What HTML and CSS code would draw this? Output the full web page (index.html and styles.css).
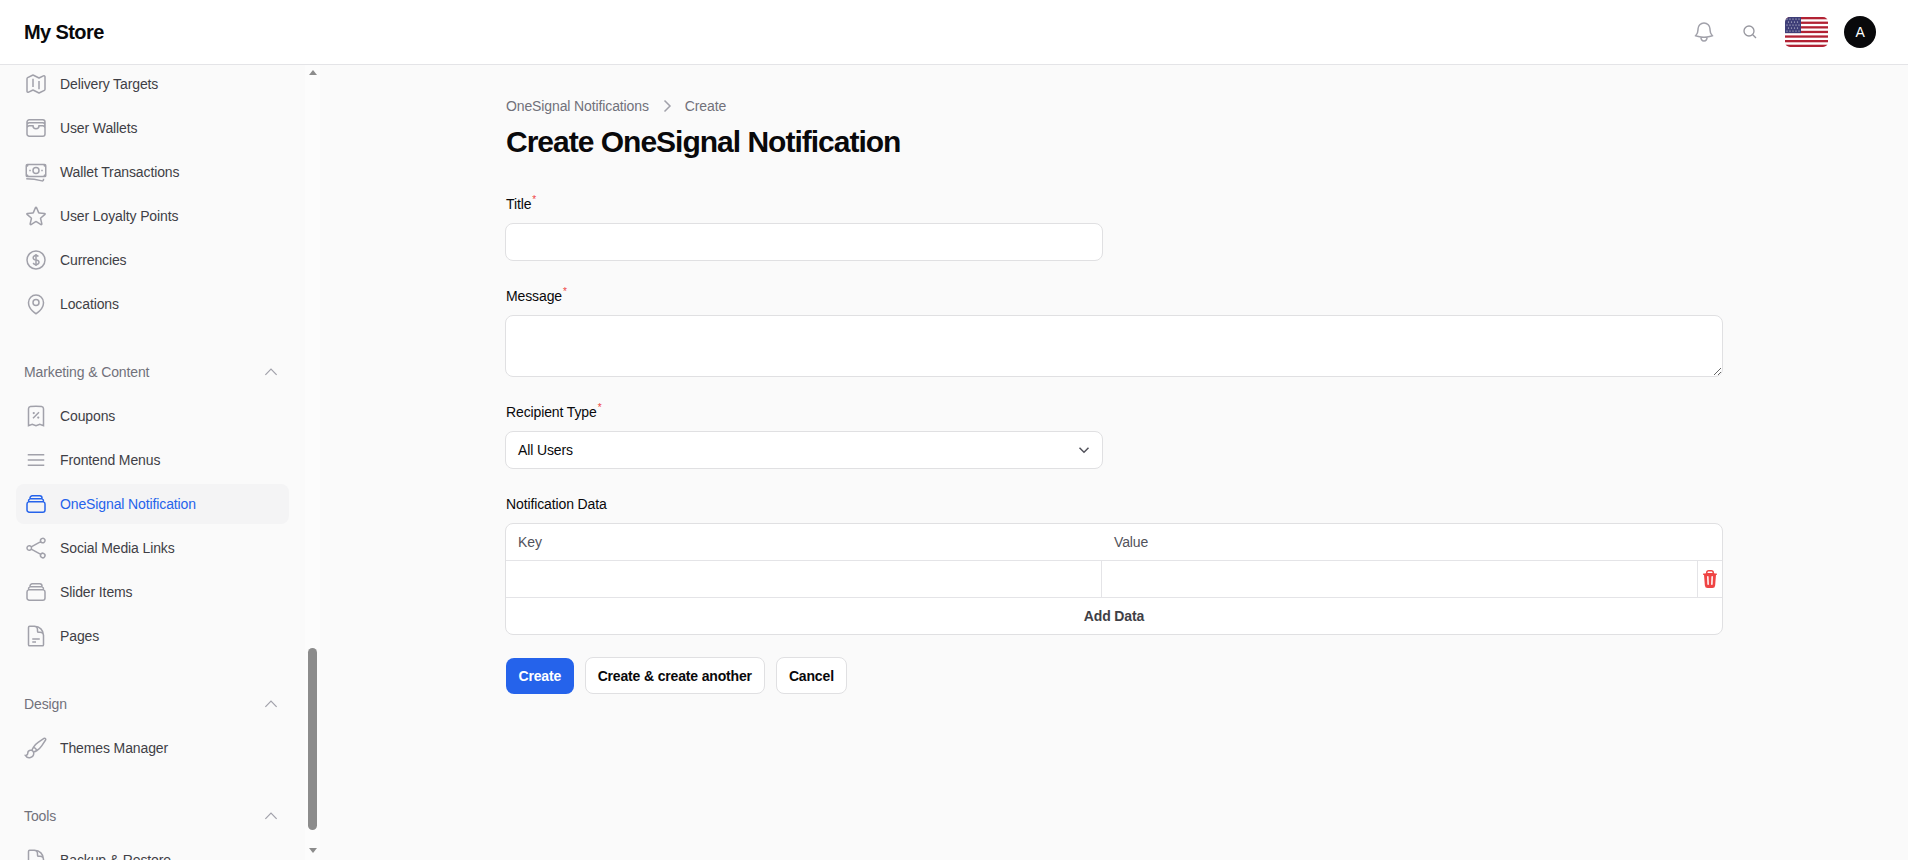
FILE: index.html
```html
<!DOCTYPE html>
<html lang="en">
<head>
<meta charset="utf-8">
<title>Create OneSignal Notification</title>
<link rel="stylesheet" href="styles.css">
</head>
<body>
<svg class="sprite" aria-hidden="true">
  <symbol id="i-map" viewBox="0 0 24 24"><path d="M9 6.75V15m6-6v8.25m.503 3.498 4.875-2.437c.381-.19.622-.58.622-1.006V4.82c0-.836-.88-1.38-1.628-1.006l-3.869 1.934c-.317.159-.69.159-1.006 0L9.503 3.252a1.125 1.125 0 0 0-1.006 0L3.622 5.689C3.24 5.88 3 6.27 3 6.695V19.18c0 .836.88 1.38 1.628 1.006l3.869-1.934c.317-.159.69-.159 1.006 0l4.994 2.497c.317.158.69.158 1.006 0Z"/></symbol>
  <symbol id="i-wallet" viewBox="0 0 24 24"><path d="M21 12a2.25 2.25 0 0 0-2.25-2.25H15a3 3 0 1 1-6 0H5.25A2.25 2.25 0 0 0 3 12m18 0v6a2.25 2.25 0 0 1-2.25 2.25H5.25A2.25 2.25 0 0 1 3 18v-6m18 0V9M3 12V9m18 0a2.25 2.25 0 0 0-2.25-2.25H5.25A2.25 2.25 0 0 0 3 9m18 0V6a2.25 2.25 0 0 0-2.25-2.25H5.25A2.25 2.25 0 0 0 3 6v3"/></symbol>
  <symbol id="i-bank" viewBox="0 0 24 24"><path d="M2.25 18.75a60.07 60.07 0 0 1 15.797 2.101c.727.198 1.453-.342 1.453-1.096V18.75M3.75 4.5v.75A.75.75 0 0 1 3 6h-.75m0 0v-.375c0-.621.504-1.125 1.125-1.125H20.25M2.25 6v9m18-10.5v.75c0 .414.336.75.75.75h.75m-1.5-1.5h.375c.621 0 1.125.504 1.125 1.125v9.75c0 .621-.504 1.125-1.125 1.125h-.375m1.5-1.5H21a.75.75 0 0 0-.75.75v.75m0 0H3.75m0 0h-.375a1.125 1.125 0 0 1-1.125-1.125V15m1.5 1.5v-.75A.75.75 0 0 0 3 15h-.75M15 10.5a3 3 0 1 1-6 0 3 3 0 0 1 6 0Zm3 0h.008v.008H18V10.5Zm-12 0h.008v.008H6V10.5Z"/></symbol>
  <symbol id="i-star" viewBox="0 0 24 24"><path d="M11.48 3.499a.562.562 0 0 1 1.04 0l2.125 5.111a.563.563 0 0 0 .475.345l5.518.442c.499.04.701.663.321.988l-4.204 3.602a.563.563 0 0 0-.182.557l1.285 5.385a.562.562 0 0 1-.84.61l-4.725-2.885a.562.562 0 0 0-.586 0L6.982 20.54a.562.562 0 0 1-.84-.61l1.285-5.386a.562.562 0 0 0-.182-.557l-4.204-3.602a.562.562 0 0 1 .321-.988l5.518-.442a.563.563 0 0 0 .475-.345L11.48 3.5Z"/></symbol>
  <symbol id="i-dollar" viewBox="0 0 24 24"><path d="M12 6v12m-3-2.818.879.659c1.171.879 3.07.879 4.242 0 1.172-.879 1.172-2.303 0-3.182C13.536 12.219 12.768 12 12 12c-.725 0-1.45-.22-2.003-.659-1.106-.879-1.106-2.303 0-3.182s2.9-.879 4.006 0l.415.33M21 12a9 9 0 1 1-18 0 9 9 0 0 1 18 0Z"/></symbol>
  <symbol id="i-pin" viewBox="0 0 24 24"><path d="M15 10.5a3 3 0 1 1-6 0 3 3 0 0 1 6 0Z"/><path d="M19.5 10.5c0 7.142-7.5 11.25-7.5 11.25S4.5 17.642 4.5 10.5a7.5 7.5 0 1 1 15 0Z"/></symbol>
  <symbol id="i-receipt" viewBox="0 0 24 24"><path d="m9 14.25 6-6m4.5-3.493V21.75l-3.75-1.5-3.75 1.5-3.75-1.5-3.75 1.5V4.757c0-1.108.806-2.057 1.907-2.185a48.507 48.507 0 0 1 11.186 0c1.1.128 1.907 1.077 1.907 2.185ZM9.75 9h.008v.008H9.75V9Zm.375 0a.375.375 0 1 1-.75 0 .375.375 0 0 1 .75 0Zm4.125 4.5h.008v.008h-.008V13.5Zm.375 0a.375.375 0 1 1-.75 0 .375.375 0 0 1 .75 0Z"/></symbol>
  <symbol id="i-bars" viewBox="0 0 24 24"><path d="M3.75 6.75h16.5M3.75 12h16.5m-16.5 5.25h16.5"/></symbol>
  <symbol id="i-stack" viewBox="0 0 24 24"><path d="M6 6.878V6a2.25 2.25 0 0 1 2.25-2.25h7.5A2.25 2.25 0 0 1 18 6v.878m-12 0c.235-.083.487-.128.75-.128h10.5c.263 0 .515.045.75.128m-12 0A2.25 2.25 0 0 0 4.5 9v.878m13.5-3A2.25 2.25 0 0 1 19.5 9v.878m0 0a2.246 2.246 0 0 0-.75-.128H5.25c-.263 0-.515.045-.75.128m15 0A2.25 2.25 0 0 1 21 12v6a2.25 2.25 0 0 1-2.25 2.25H5.25A2.25 2.25 0 0 1 3 18v-6c0-.98.626-1.813 1.5-2.122"/></symbol>
  <symbol id="i-share" viewBox="0 0 24 24"><path d="M7.217 10.907a2.25 2.25 0 1 0 0 2.186m0-2.186c.18.324.283.696.283 1.093s-.103.77-.283 1.093m0-2.186 9.566-5.314m-9.566 7.5 9.566 5.314m0 0a2.25 2.25 0 1 0 3.935 2.186 2.25 2.25 0 0 0-3.935-2.186Zm0-12.814a2.25 2.25 0 1 0 3.933-2.185 2.25 2.25 0 0 0-3.933 2.185Z"/></symbol>
  <symbol id="i-doc" viewBox="0 0 24 24"><path d="M19.5 14.25v-2.625a3.375 3.375 0 0 0-3.375-3.375h-1.5A1.125 1.125 0 0 1 13.5 7.125v-1.5a3.375 3.375 0 0 0-3.375-3.375H8.25m0 12.75h7.5m-7.5 3H12M10.5 2.25H5.625c-.621 0-1.125.504-1.125 1.125v17.25c0 .621.504 1.125 1.125 1.125h12.75c.621 0 1.125-.504 1.125-1.125V11.25a9 9 0 0 0-9-9Z"/></symbol>
  <symbol id="i-brush" viewBox="0 0 24 24"><path d="M9.53 16.122a3 3 0 0 0-5.78 1.128 2.25 2.25 0 0 1-2.4 2.245 4.5 4.5 0 0 0 8.4-2.245c0-.399-.078-.78-.22-1.128Zm0 0a15.998 15.998 0 0 0 3.388-1.62m-5.043-.025a15.994 15.994 0 0 1 1.622-3.395m3.42 3.42a15.995 15.995 0 0 0 4.764-4.648l3.876-5.814a1.151 1.151 0 0 0-1.597-1.597L14.146 6.32a15.996 15.996 0 0 0-4.649 4.763m3.42 3.42a6.776 6.776 0 0 0-3.42-3.42"/></symbol>
  <symbol id="i-up" viewBox="0 0 24 24"><path d="m4.5 15.75 7.5-7.5 7.5 7.5"/></symbol>
</svg>

<header class="topbar">
  <div class="brand">My Store</div>
  <div class="top-actions">
    <svg class="top-icon bell" viewBox="0 0 24 24"><path d="M14.857 17.082a23.848 23.848 0 0 0 5.454-1.31A8.967 8.967 0 0 1 18 9.75V9A6 6 0 0 0 6 9v.75a8.967 8.967 0 0 1-2.312 6.022c1.733.64 3.56 1.085 5.455 1.31m5.714 0a24.255 24.255 0 0 1-5.714 0m5.714 0a3 3 0 1 1-5.714 0"/></svg>
    <svg class="top-icon search" viewBox="0 0 24 24"><path d="m21 21-5.197-5.197m0 0A7.5 7.5 0 1 0 5.196 5.196a7.5 7.5 0 0 0 10.607 10.607Z"/></svg>
    <svg class="flag" viewBox="0 0 43 30">
      <rect width="43" height="30" fill="#fff"/>
      <g fill="#b22234">
        <rect y="0" width="43" height="2.3"/><rect y="4.6" width="43" height="2.3"/><rect y="9.2" width="43" height="2.3"/><rect y="13.8" width="43" height="2.3"/><rect y="18.4" width="43" height="2.3"/><rect y="23" width="43" height="2.3"/><rect y="27.7" width="43" height="2.3"/>
      </g>
      <rect width="16" height="16.1" fill="#3f3f78"/>
      <g fill="#fff" opacity=".85">
        <circle cx="2" cy="2" r=".6"/><circle cx="5" cy="2" r=".6"/><circle cx="8" cy="2" r=".6"/><circle cx="11" cy="2" r=".6"/><circle cx="14" cy="2" r=".6"/>
        <circle cx="3.5" cy="5" r=".6"/><circle cx="6.5" cy="5" r=".6"/><circle cx="9.5" cy="5" r=".6"/><circle cx="12.5" cy="5" r=".6"/>
        <circle cx="2" cy="8" r=".6"/><circle cx="5" cy="8" r=".6"/><circle cx="8" cy="8" r=".6"/><circle cx="11" cy="8" r=".6"/><circle cx="14" cy="8" r=".6"/>
        <circle cx="3.5" cy="11" r=".6"/><circle cx="6.5" cy="11" r=".6"/><circle cx="9.5" cy="11" r=".6"/><circle cx="12.5" cy="11" r=".6"/>
        <circle cx="2" cy="14" r=".6"/><circle cx="5" cy="14" r=".6"/><circle cx="8" cy="14" r=".6"/><circle cx="11" cy="14" r=".6"/><circle cx="14" cy="14" r=".6"/>
      </g>
    </svg>
    <div class="avatar">A</div>
  </div>
</header>

<div class="body-row">
  <aside class="sidebar">
    <nav class="nav">
      <ul class="group">
        <li class="item"><svg class="ico"><use href="#i-map"/></svg>Delivery Targets</li>
        <li class="item"><svg class="ico"><use href="#i-wallet"/></svg>User Wallets</li>
        <li class="item"><svg class="ico"><use href="#i-bank"/></svg>Wallet Transactions</li>
        <li class="item"><svg class="ico"><use href="#i-star"/></svg>User Loyalty Points</li>
        <li class="item"><svg class="ico"><use href="#i-dollar"/></svg>Currencies</li>
        <li class="item"><svg class="ico"><use href="#i-pin"/></svg>Locations</li>
      </ul>
      <div class="group-label">Marketing &amp; Content<svg class="chev"><use href="#i-up"/></svg></div>
      <ul class="group">
        <li class="item"><svg class="ico"><use href="#i-receipt"/></svg>Coupons</li>
        <li class="item"><svg class="ico"><use href="#i-bars"/></svg>Frontend Menus</li>
        <li class="item active"><svg class="ico"><use href="#i-stack"/></svg>OneSignal Notification</li>
        <li class="item"><svg class="ico"><use href="#i-share"/></svg>Social Media Links</li>
        <li class="item"><svg class="ico"><use href="#i-stack"/></svg>Slider Items</li>
        <li class="item"><svg class="ico"><use href="#i-doc"/></svg>Pages</li>
      </ul>
      <div class="group-label">Design<svg class="chev"><use href="#i-up"/></svg></div>
      <ul class="group">
        <li class="item"><svg class="ico"><use href="#i-brush"/></svg>Themes Manager</li>
      </ul>
      <div class="group-label">Tools<svg class="chev"><use href="#i-up"/></svg></div>
      <ul class="group">
        <li class="item"><svg class="ico"><use href="#i-doc"/></svg>Backup &amp; Restore</li>
      </ul>
    </nav>
    <div class="scrollbar">
      <span class="arrow-up"></span>
      <span class="thumb"></span>
      <span class="arrow-down"></span>
    </div>
  </aside>

  <main class="main">
    <div class="crumbs"><span>OneSignal Notifications</span>
      <svg class="crumb-sep" viewBox="0 0 20 20"><path d="M7.5 4.5 13 10l-5.500 5.500"/></svg>
      <span>Create</span></div>
    <h1 class="title">Create OneSignal Notification</h1>
    <form class="form">
      <div class="field half">
        <label class="label">Title<sup class="req">*</sup></label>
        <input class="control" type="text">
      </div>
      <div class="field">
        <label class="label">Message<sup class="req">*</sup></label>
        <textarea class="control area"></textarea>
      </div>
      <div class="field half">
        <label class="label">Recipient Type<sup class="req">*</sup></label>
        <div class="control select">All Users
          <svg class="sel-chev" viewBox="0 0 20 20"><path d="M5.500 7.750 10 12.250l4.500-4.500"/></svg>
        </div>
      </div>
      <div class="field">
        <label class="label">Notification Data</label>
        <div class="kv">
          <div class="kv-row kv-head"><div class="kv-cell">Key</div><div class="kv-cell">Value</div></div>
          <div class="kv-row">
            <div class="kv-cell"></div>
            <div class="kv-cell kv-val"></div>
            <div class="kv-del"><svg class="trash" viewBox="0 0 20 20"><path fill-rule="evenodd" clip-rule="evenodd" d="M8.750 1A2.750 2.750 0 0 0 6 3.750v.443c-.795.077-1.584.176-2.365.298a.75.75 0 1 0 .23 1.482l.149-.022.841 10.518A2.750 2.750 0 0 0 7.596 19h4.807a2.750 2.750 0 0 0 2.742-2.530l.841-10.520.149.023a.75.75 0 0 0 .23-1.482A41.030 41.030 0 0 0 14 4.193V3.750A2.750 2.750 0 0 0 11.250 1h-2.500ZM10 4c.84 0 1.673.025 2.500.075V3.750c0-.69-.56-1.250-1.250-1.250h-2.500c-.69 0-1.250.56-1.250 1.250v.325C8.327 4.025 9.160 4 10 4ZM8.580 7.720a.75.75 0 0 0-1.500.06l.3 7.500a.75.75 0 1 0 1.500-.06l-.3-7.500Zm4.340.06a.75.75 0 1 0-1.500-.06l-.3 7.500a.75.75 0 1 0 1.500.06l.3-7.500Z"/></svg></div>
          </div>
          <div class="kv-add">Add Data</div>
        </div>
      </div>
      <div class="actions">
        <button type="button" class="btn primary">Create</button>
        <button type="button" class="btn">Create &amp; create another</button>
        <button type="button" class="btn">Cancel</button>
      </div>
    </form>
  </main>
</div>
</body>
</html>
```
FILE: styles.css
```css
* { box-sizing: border-box; }
html, body { margin: 0; height: 100%; overflow: hidden; }
body {
  font-family: "Liberation Sans", Arial, sans-serif;
  font-size: 14px;
  letter-spacing: -0.12px;
  color: #09090b;
  background: #fafafa;
  display: flex;
  flex-direction: column;
}
.sprite { display: none; }

.topbar {
  flex: 0 0 65px;
  background: #fff;
  border-bottom: 1px solid #e4e4e7;
  display: flex;
  align-items: center;
  justify-content: space-between;
  padding: 0 32px 0 24px;
}
.brand { font-size: 20px; font-weight: 700; color: #09090b; letter-spacing: -0.6px; }
.top-actions { display: flex; align-items: center; }
.top-icon { fill: none; stroke: #a1a1aa; stroke-width: 1.5; }
.bell { width: 24px; height: 24px; margin-right: 26px; }
.search { width: 16px; height: 16px; margin-right: 27px; stroke: #97979f; stroke-width: 2; }
.flag { width: 43px; height: 30px; border-radius: 5px; margin-right: 16px; display: block; }
.avatar {
  width: 32px; height: 32px; border-radius: 50%;
  background: #09090b; color: #fff;
  display: flex; align-items: center; justify-content: center;
  font-size: 14px;
}

.body-row { flex: 1; min-height: 0; display: flex; }
.sidebar { flex: 0 0 320px; display: flex; overflow: hidden; }
.nav { flex: 1; margin-top: -1px; padding: 0 16px; }
.group { list-style: none; margin: 0; padding: 0; display: flex; flex-direction: column; gap: 4px; }
.item {
  height: 40px;
  display: flex; align-items: center; gap: 12px;
  padding: 0 8px;
  border-radius: 8px;
  color: #3f3f46;
  white-space: nowrap;
}
.ico { width: 24px; height: 24px; flex: none; fill: none; stroke: #a1a1aa; stroke-width: 1.5; }
.item.active { background: #f4f4f5; color: #2563eb; }
.item.active .ico { stroke: #2563eb; }
.group-label {
  height: 20px;
  margin: 38px 0 14px 8px;
  padding-right: 9px;
  display: flex; align-items: center; justify-content: space-between;
  color: #71717a;
}
.chev { width: 18px; height: 18px; fill: none; stroke: #a1a1aa; stroke-width: 1.6; }

.scrollbar {
  flex: 0 0 15px;
  background: #fcfcfc;
  display: flex; flex-direction: column; align-items: center;
}
.arrow-up, .arrow-down { width: 0; height: 0; border-left: 4.5px solid transparent; border-right: 4.5px solid transparent; }
.arrow-up { border-bottom: 5px solid #8c8c8c; margin-top: 5px; }
.thumb { width: 9px; height: 182px; background: #8c8c8c; border-radius: 5px; margin-top: 573px; }
.arrow-down { border-top: 5px solid #8c8c8c; margin-top: 18px; }

.main { flex: 1; min-width: 0; padding: 31px 185px 0 185px; }
.crumbs { display: flex; align-items: center; gap: 10px; color: #71717a; height: 20px; margin-left: 1px; }
.crumb-sep { width: 20px; height: 20px; fill: none; stroke: #a1a1aa; stroke-width: 1.5; margin: 0 -2px; }
.title { margin: 8px 0 0 1px; font-size: 30px; line-height: 36px; font-weight: 700; color: #09090b; letter-spacing: -1px; }
.form { margin-top: 33px; display: flex; flex-direction: column; gap: 24px; }
.field { display: flex; flex-direction: column; gap: 8px; }
.field.half { width: 598px; }
.label { line-height: 22px; height: 22px; color: #09090b; margin-left: 1px; }
.req { color: #ef4444; font-size: 10px; line-height: 0; margin-left: 1px; }
.control {
  display: block;
  width: 100%;
  height: 38px;
  background: #fff;
  border: 1px solid #e0e0e2;
  border-radius: 8px;
  padding: 0 12px;
  font: inherit;
  color: #09090b;
}
.area { height: 62px; resize: vertical; padding: 6px 12px; }
.select { display: flex; align-items: center; justify-content: space-between; padding-right: 8px; }
.sel-chev { width: 20px; height: 20px; fill: none; stroke: #52525b; stroke-width: 1.5; }

.kv { background: #fff; border: 1px solid #e0e0e2; border-radius: 8px; overflow: hidden; }
.kv-row { display: flex; height: 37px; border-bottom: 1px solid #e4e4e7; }
.kv-cell { flex: 0 0 596px; padding: 0 12px; display: flex; align-items: center; color: #52525b; border-right: 1px solid #e4e4e7; }
.kv-head .kv-cell { border-right: 0; }
.kv-val { flex: 1; }
.kv-del { flex: 0 0 24px; display: flex; align-items: center; justify-content: center; }
.trash { width: 20px; height: 20px; fill: #ef4444; }
.kv-add { height: 36px; display: flex; align-items: center; justify-content: center; font-weight: 700; color: #3f3f46; }

.actions { display: flex; align-items: center; gap: 11px; margin-top: -2px; margin-left: 1px; }
.btn {
  height: 37px;
  padding: 0 12px;
  border-radius: 8px;
  border: 1px solid #e0e0e2;
  background: #fff;
  font: inherit;
  letter-spacing: -0.16px;
  font-weight: 700;
  color: #09090b;
}
.btn.primary { background: #2563eb; border: 0; color: #fff; height: 36px; padding: 0 12.5px; }
```
